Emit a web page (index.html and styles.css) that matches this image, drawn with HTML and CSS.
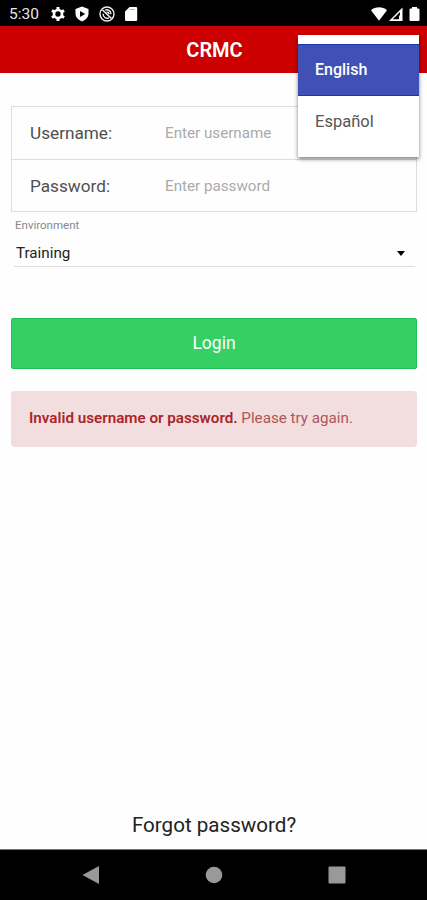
FILE: index.html
```
<!DOCTYPE html>
<html lang="en">

<head>
  <meta charset="UTF-8">
  <meta name="viewport" content="width=device-width, initial-scale=1.0">
  <title>CRMC</title>
  <link rel="stylesheet" href="styles.css">
</head>

<body>
  <div class="status-bar">
    <span class="time">5:30</span>
    <div class="status-icons">
      <!-- settings -->
      <svg width="16" height="16" viewBox="0 0 24 24">
        <circle cx="12" cy="12" r="6" fill="none" stroke="#fff" stroke-width="4"/>
        <path d="M12 1.500v5M12 17.500v5M2.900 6.750l4.300 2.500M16.800 14.750l4.300 2.500M2.900 17.250l4.300-2.500M16.800 9.250l4.300-2.500" stroke="#fff" stroke-width="4.500"/>
      </svg>
      <!-- play protect -->
      <svg width="16" height="16" viewBox="0 0 16 16">
        <path d="M8 .5l6.500 2.500v4.500c0 3.600-2.600 6.400-6.500 8-3.900-1.600-6.500-4.400-6.500-8V3z" fill="#fff"/>
        <path d="M6 5l5.200 3L6 11z" fill="#000"/>
      </svg>
      <!-- sync off -->
      <svg width="16" height="16" viewBox="0 0 16 16" fill="none" stroke="#eee">
        <circle cx="8" cy="8" r="7" stroke-width="1.400"/>
        <path d="M3.500 4l9 8.500" stroke-width="1.600"/>
        <path d="M6 4.200c2.500-1.300 6 .3 5.900 4M10 11.800c-2.500 1.300-6-.3-5.900-4M7.500 6.200c1.400-.3 2.500.8 2.400 2" stroke-width="1.400"/>
      </svg>
      <!-- sd card -->
      <svg width="16" height="16" viewBox="0 0 16 16">
        <path d="M6.500 1H13a1.200 1.200 0 0 1 1.200 1.200v11.600A1.200 1.200 0 0 1 13 15H3.200A1.200 1.200 0 0 1 2 13.800V5.500z" fill="#fff"/>
        <path d="M6.500 3.500h5.500" stroke="#bbb" stroke-width="1"/>
      </svg>
    </div>
    <svg class="signal" width="50" height="16" viewBox="0 0 50 16">
      <path d="M1 4.200C5.500.4 12.500.4 17 4.200L9 14.800z" fill="#fff"/>
      <path d="M32.500 1.500V15H19z" fill="#fff"/>
      <path d="M29 7v6.300h-6.300z" fill="#000"/>
      <path d="M29.500 6.500v3" stroke="#000" stroke-width="1"/>
      <path d="M42 1h5v1.500h1.500a1 1 0 0 1 1 1V14a1 1 0 0 1-1 1h-8a1 1 0 0 1-1-1V3.500a1 1 0 0 1 1-1H42z" fill="#fff"/>
    </svg>
  </div>

  <div class="header">
    <h1>CRMC</h1>
    <ul class="language-menu">
      <li class="selected">English</li>
      <li>Español</li>
    </ul>
  </div>

  <div class="content">
    <div class="fields">
      <label class="field">
        <span>Username:</span>
        <input type="text" placeholder="Enter username">
      </label>
      <label class="field">
        <span>Password:</span>
        <input type="password" placeholder="Enter password">
      </label>
    </div>

    <div class="environment">
      <div class="environment-label">Environment</div>
      <div class="environment-select">
        <span>Training</span>
        <span class="arrow"></span>
      </div>
    </div>

    <button class="login">Login</button>

    <div class="alert"><strong>Invalid username or password.</strong> Please try again.</div>
  </div>

  <div class="forgot">Forgot password?</div>

  <div class="nav-bar">
    <svg width="18" height="20" viewBox="0 0 18 20"><path d="M17 1v18L.5 10z" fill="#999"/></svg>
    <svg width="18" height="20" viewBox="0 0 18 20"><circle cx="9" cy="10" r="8.300" fill="#999"/></svg>
    <svg width="18" height="20" viewBox="0 0 18 20"><rect x=".5" y="1.500" width="17" height="17" rx="1" fill="#999"/></svg>
  </div>
</body>

</html>
```
FILE: styles.css
```
* {
  margin: 0;
  padding: 0;
  box-sizing: border-box;
}

body {
  height: 900px;
  background-color: #fefefe;
  display: flex;
  flex-direction: column;
  font-family: Roboto, sans-serif;
  color: #505050;
  overflow: hidden;
}

.status-bar {
  height: 26px;
  padding: 1px 7px 0 9px;
  background-color: #000000;
  color: #e8e8e8;
  display: flex;
  align-items: center;
}

.time {
  width: 41px;
  font-size: 15.5px;
}

.status-icons {
  display: flex;
  gap: 8.3px;
}

.signal {
  margin-left: auto;
}

.header {
  position: relative;
  height: 47px;
  background-color: #cc0000;
  display: flex;
  justify-content: center;
  align-items: center;
}

.header h1 {
  padding: 1px 0 0 2px;
  color: #ffffff;
  font-size: 20px;
  font-weight: 600;
}

.language-menu {
  position: absolute;
  top: 9px;
  right: 8px;
  width: 121px;
  height: 122px;
  padding-top: 9px;
  background-color: #ffffff;
  list-style: none;
  box-shadow: 0 2px 4px rgba(0, 0, 0, 0.5);
}

.language-menu li {
  height: 52px;
  padding-left: 17px;
  font-size: 16.5px;
  line-height: 51px;
  color: #555555;
}

.language-menu .selected {
  background-color: #3f51b5;
  border: 1px solid #1c35a8;
  border-width: 1px 0;
  line-height: 49px;
  color: #ffffff;
  font-weight: 500;
  font-size: 16px;
}

.content {
  flex: 1;
  padding: 33px 10px 0 11px;
}

.fields {
  border: 1px solid #dddddd;
}

.field {
  height: 52px;
  padding-left: 18px;
  display: flex;
  align-items: center;
  font-size: 17.2px;
}

.field + .field {
  border-top: 1px solid #dddddd;
}

.field span {
  width: 135px;
}

.field input {
  width: 200px;
  border: none;
  outline: none;
  background: none;
  font-family: inherit;
  font-size: 15.2px;
}

.field input::placeholder {
  color: #aaaaaa;
}

.environment {
  margin: 6px 2px 0 3px;
}

.environment-label {
  padding-left: 1px;
  font-size: 11.5px;
  line-height: 14px;
  color: #888888;
}

.environment-select {
  height: 35px;
  padding: 7px 9px 0 2px;
  border-bottom: 1px solid #dddddd;
  display: flex;
  justify-content: space-between;
  align-items: center;
  font-size: 15.2px;
  color: #222222;
}

.arrow {
  margin: 2px 1px 0 0;
  border: 4.5px solid transparent;
  border-top: 5px solid #000000;
  border-bottom: none;
}

.login {
  display: block;
  width: 100%;
  height: 51px;
  margin-top: 51px;
  padding-bottom: 1px;
  border: 1px solid #1fc158;
  border-radius: 2px;
  background-color: #35d063;
  color: #ffffff;
  font-family: inherit;
  font-size: 17.5px;
}

.alert {
  height: 56px;
  margin-top: 22px;
  padding-left: 18px;
  border-radius: 4px;
  background-color: #f2dede;
  font-size: 15.2px;
  line-height: 55px;
  color: #b05558;
}

.alert strong {
  font-weight: 600;
  color: #a9262c;
}

.forgot {
  height: 48px;
  padding-left: 1px;
  text-align: center;
  font-size: 20.6px;
  line-height: 49px;
  color: #222222;
}

.nav-bar {
  height: 51px;
  padding-bottom: 1px;
  border-top: 1px solid #777777;
  background-color: #000000;
  display: flex;
  justify-content: center;
  align-items: center;
  gap: 105px;
}
```
